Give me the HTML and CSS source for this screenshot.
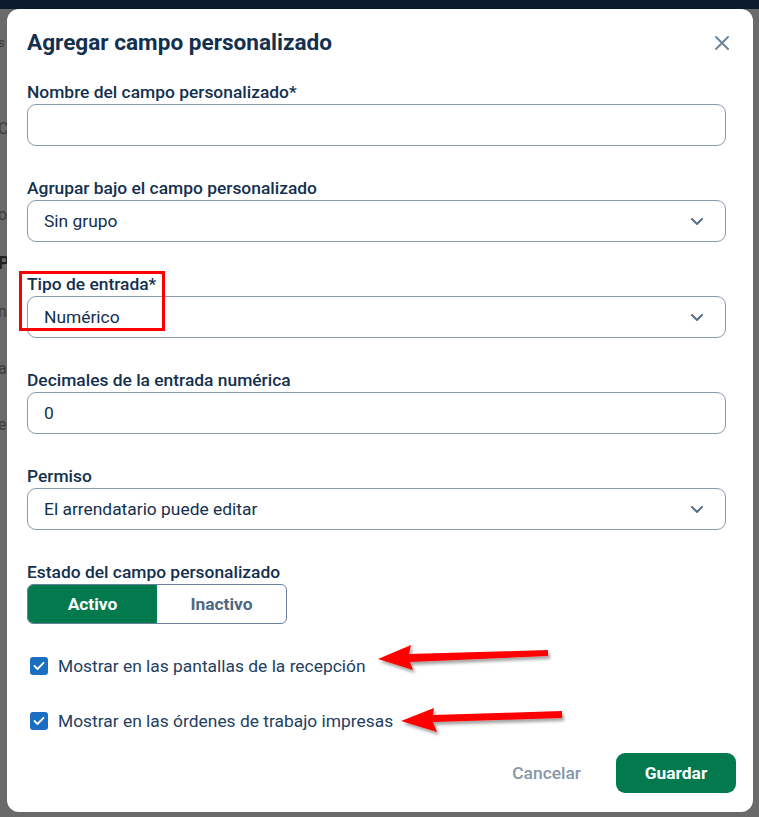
FILE: index.html
```html
<!DOCTYPE html>
<html lang="es">
<head>
<meta charset="utf-8">
<title>Agregar campo personalizado</title>
<link rel="stylesheet" href="styles.css">
</head>
<body>
<div class="topbar"></div>
<div class="backdrop">
  <div class="behind">
    <span class="b1">s</span>
    <span class="b2">C</span>
    <span class="b3">o</span>
    <span class="b4">P</span>
    <span class="b5">n</span>
    <span class="b6">a</span>
    <span class="b7">e</span>
  </div>
  <div class="modal">
    <div class="modal-head">
      <h1 class="title">Agregar campo personalizado</h1>
      <button class="close" aria-label="Cerrar">
        <svg width="16" height="16" viewBox="0 0 16 16"><path d="M2 2 L14 14 M14 2 L2 14" stroke="#6e8499" stroke-width="2" stroke-linecap="round"/></svg>
      </button>
    </div>
    <div class="form">
      <div class="field">
        <label class="label">Nombre del campo personalizado*</label>
        <div class="input"></div>
      </div>
      <div class="field">
        <label class="label">Agrupar bajo el campo personalizado</label>
        <div class="input select"><span>Sin grupo</span><svg class="chev" width="14" height="9" viewBox="0 0 14 9"><path d="M2 2 L7 7 L12 2" fill="none" stroke="#5a6e82" stroke-width="2" stroke-linecap="round" stroke-linejoin="round"/></svg></div>
      </div>
      <div class="field">
        <label class="label">Tipo de entrada*</label>
        <div class="input select"><span>Numérico</span><svg class="chev" width="14" height="9" viewBox="0 0 14 9"><path d="M2 2 L7 7 L12 2" fill="none" stroke="#5a6e82" stroke-width="2" stroke-linecap="round" stroke-linejoin="round"/></svg></div>
      </div>
      <div class="field">
        <label class="label">Decimales de la entrada numérica</label>
        <div class="input"><span>0</span></div>
      </div>
      <div class="field">
        <label class="label">Permiso</label>
        <div class="input select"><span>El arrendatario puede editar</span><svg class="chev" width="14" height="9" viewBox="0 0 14 9"><path d="M2 2 L7 7 L12 2" fill="none" stroke="#5a6e82" stroke-width="2" stroke-linecap="round" stroke-linejoin="round"/></svg></div>
      </div>
      <div class="field">
        <label class="label">Estado del campo personalizado</label>
        <div class="toggle">
          <div class="opt on">Activo</div>
          <div class="opt">Inactivo</div>
        </div>
      </div>
      <div class="check first">
        <span class="box"><svg width="12" height="10" viewBox="0 0 12 10"><path d="M1.5 5 L4.5 8 L10.5 1.8" fill="none" stroke="#fff" stroke-width="1.8" stroke-linecap="round" stroke-linejoin="round"/></svg></span>
        <span class="ctext">Mostrar en las pantallas de la recepción</span>
      </div>
      <div class="check">
        <span class="box"><svg width="12" height="10" viewBox="0 0 12 10"><path d="M1.5 5 L4.5 8 L10.5 1.8" fill="none" stroke="#fff" stroke-width="1.8" stroke-linecap="round" stroke-linejoin="round"/></svg></span>
        <span class="ctext">Mostrar en las órdenes de trabajo impresas</span>
      </div>
    </div>
    <div class="footer">
      <button class="cancel">Cancelar</button>
      <button class="save">Guardar</button>
    </div>
  </div>
</div>
<div class="highlight"></div>
<svg class="arrows" width="759" height="817" viewBox="0 0 759 817">
  <defs>
    <filter id="sh" x="-10%" y="-50%" width="130%" height="250%">
      <feDropShadow dx="2" dy="3" stdDeviation="1.6" flood-color="#000" flood-opacity="0.35"/>
    </filter>
  </defs>
  <polygon filter="url(#sh)" fill="#ff0000" points="378,659 411,645 409,654 548,650 548,656 410,662 413,670"/>
  <polygon filter="url(#sh)" fill="#ff0000" points="401,721 434,708 433,715 562,711 562,718 433,722 437,732"/>
</svg>
</body>
</html>
```
FILE: styles.css
```css
* { box-sizing: border-box; }
html, body { margin: 0; padding: 0; }
body {
  width: 759px;
  height: 817px;
  overflow: hidden;
  background: #6a6a6a;
  font-family: Roboto, "Liberation Sans", Arial, sans-serif;
  position: relative;
}
.topbar {
  height: 9px;
  background: #0b1a2c;
}
.backdrop {
  display: flex;
  padding: 0 6px 5px 7px;
  position: relative;
}
.behind {
  position: absolute;
  left: 0;
  top: 0;
  width: 7px;
  height: 808px;
  overflow: hidden;
  color: #3c3c3c;
  font-size: 16px;
}
.behind span { position: absolute; left: -2px; }
.behind .b1 { top: 26px; font-size: 13px; }
.behind .b2 { top: 110px; }
.behind .b3 { top: 196px; }
.behind .b4 { top: 243px; color: #222; font-weight: 700; font-size: 18px; }
.behind .b5 { top: 293px; }
.behind .b6 { top: 350px; }
.behind .b7 { top: 406px; }
.modal {
  width: 746px;
  height: 803px;
  background: #ffffff;
  border-radius: 12px;
  padding: 21px 27px 19px 20px;
  display: flex;
  flex-direction: column;
}
.modal-head {
  display: flex;
  justify-content: space-between;
  align-items: center;
  height: 26px;
}
.title {
  margin: 0;
  font-size: 22.6px;
  font-weight: 700;
  color: #13304f;
  line-height: 26px;
}
.close {
  border: 0;
  background: none;
  padding: 0;
  margin-right: -4px;
  width: 16px;
  height: 16px;
  display: flex;
}
.form {
  margin-top: 26px;
  display: flex;
  flex-direction: column;
}
.field {
  display: flex;
  flex-direction: column;
  margin-bottom: 32px;
}
.label {
  font-size: 17.4px;
  font-weight: 500;
  color: #13304f;
  line-height: 20px;
  margin-bottom: 2px;
}
.input {
  height: 42px;
  border: 1px solid #8b9cb0;
  border-radius: 9px;
  display: flex;
  align-items: center;
  justify-content: space-between;
  padding: 0 21px 0 16px;
  font-size: 17.4px;
  color: #13304f;
}
.chev { margin-top: 1px; }
.field:nth-child(6) { margin-bottom: 0; }
.toggle {
  display: flex;
  width: 260px;
  height: 40px;
  border: 1px solid #6a8096;
  border-radius: 6px;
  overflow: hidden;
}
.opt {
  flex: 1;
  display: flex;
  align-items: center;
  justify-content: center;
  font-size: 17.4px;
  font-weight: 700;
  color: #4f6880;
}
.opt.on {
  background: #027a4e;
  color: #ffffff;
}
.check {
  display: flex;
  align-items: center;
  gap: 10px;
  padding-left: 3px;
  height: 22px;
  margin-top: 33px;
}
.check.first { margin-top: 31px; }
.box {
  width: 18px;
  height: 18px;
  border-radius: 3px;
  background: #1b6fc2;
  display: flex;
  align-items: center;
  justify-content: center;
}
.ctext {
  font-size: 17.4px;
  color: #23405f;
}
.footer {
  margin-top: auto;
  display: flex;
  justify-content: flex-end;
  align-items: center;
  gap: 35px;
  margin-right: -10px;
}
.cancel {
  border: 0;
  background: none;
  font-family: inherit;
  font-size: 17.4px;
  font-weight: 500;
  color: #8796a6;
  padding: 0;
}
.save {
  border: 0;
  width: 120px;
  height: 40px;
  border-radius: 9px;
  background: #027a4e;
  color: #ffffff;
  font-family: inherit;
  font-size: 17.4px;
  font-weight: 700;
}
.highlight {
  position: absolute;
  left: 19px;
  top: 271px;
  width: 146px;
  height: 60px;
  border: 3px solid #ff0000;
}
.arrows {
  position: absolute;
  left: 0;
  top: 0;
  pointer-events: none;
}
```
